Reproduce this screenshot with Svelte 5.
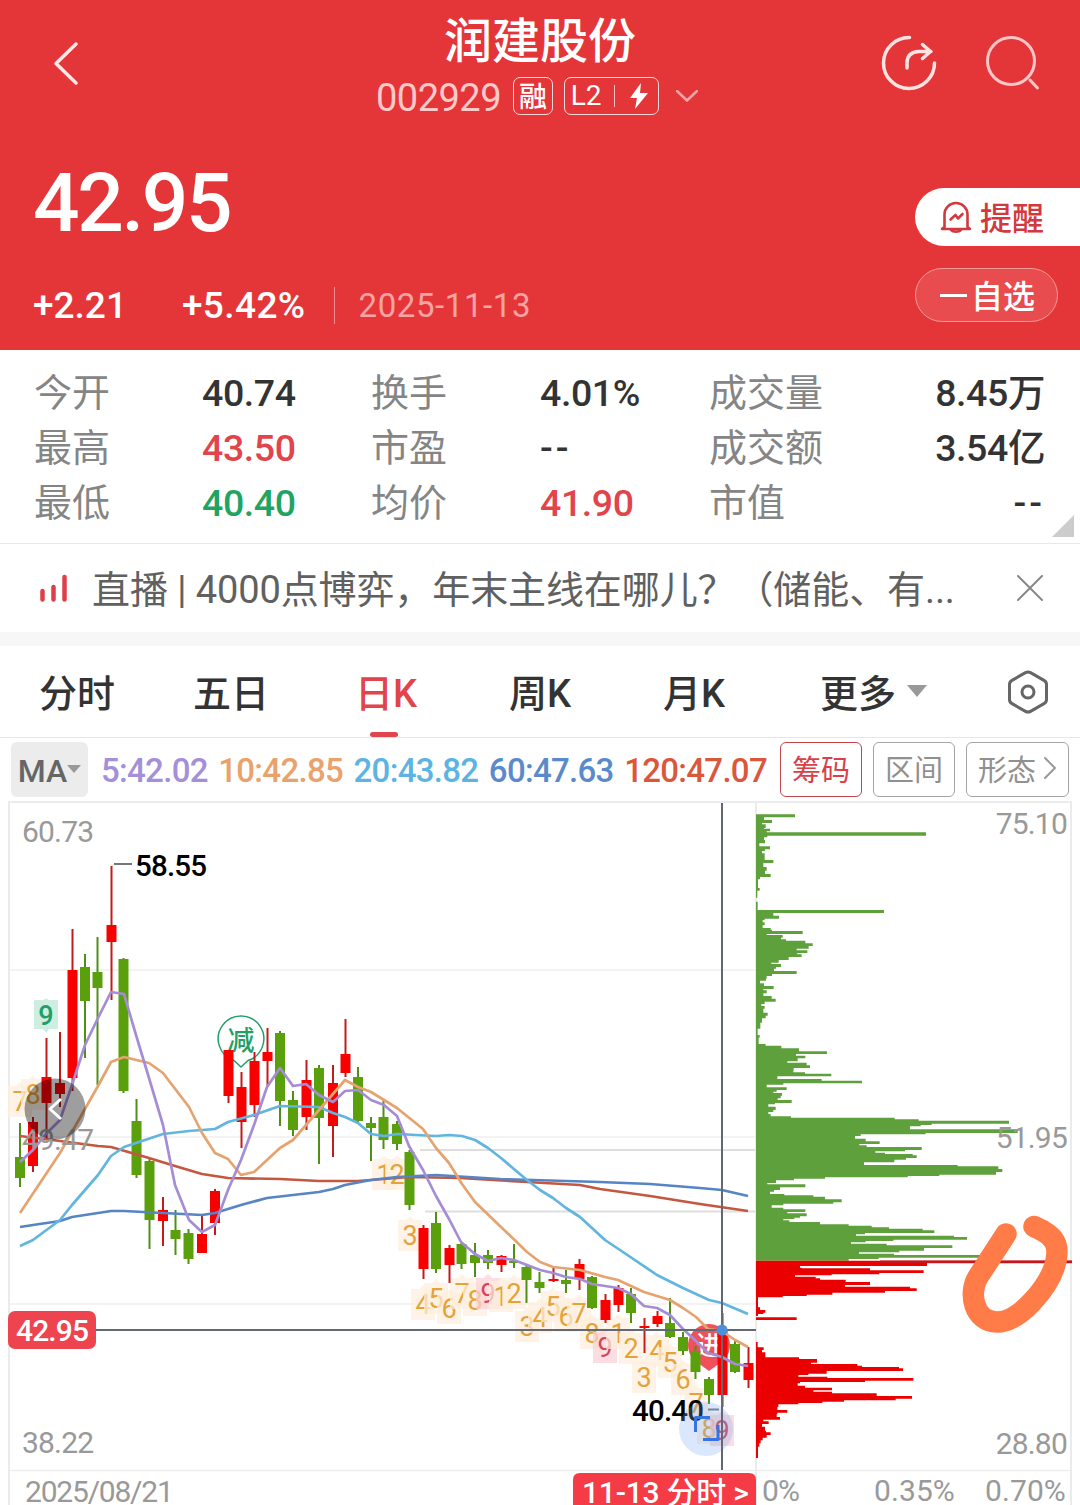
<script lang="ts">
	const stats = [
		['今开', '40.74', '', '换手', '4.01%', '', '成交量', '8.45万'],
		['最高', '43.50', 'up', '市盈', '--', '', '成交额', '3.54亿'],
		['最低', '40.40', 'down', '均价', '41.90', 'up', '市值', '--']
	];

	const averages = [
		{ period: '5', value: '42.02', color: '#a48fd8' },
		{ period: '10', value: '42.85', color: '#e9a26c' },
		{ period: '20', value: '43.82', color: '#5db4e2' },
		{ period: '60', value: '47.63', color: '#5b8acb' },
		{ period: '120', value: '47.07', color: '#d9583b' }
	];

	let tabs = ['分时', '五日', '日K', '周K', '月K'];
	let activeTab = $state('日K');

	// x, high, low, body top, body bottom, rising
	const candles = [
		[20, 1123, 1187, 1157, 1178, 0], [33, 1117, 1172, 1122, 1166, 1],
		[46.5, 1038, 1140, 1077, 1103, 1], [60, 1032, 1107, 1083, 1094, 1],
		[72.5, 929, 1091, 970, 1078, 1], [85, 954, 1058, 967, 1001, 0],
		[97.5, 937, 1085, 972, 988, 0], [111.5, 866, 1000, 925, 942, 1],
		[123.5, 958, 1093, 959, 1091, 0], [136.5, 1099, 1178, 1121, 1175, 0],
		[149.5, 1158, 1249, 1161, 1220, 0], [163, 1197, 1246, 1210, 1221, 1],
		[175.5, 1210, 1255, 1230, 1239, 0], [188.5, 1229, 1264, 1233, 1259, 0],
		[202, 1215, 1253, 1234, 1253, 1], [215, 1189, 1235, 1191, 1223, 1],
		[228.5, 1050, 1103, 1050, 1096, 1], [241.5, 1072, 1148, 1087, 1122, 1],
		[254.5, 1052, 1117, 1061, 1105, 1], [267.5, 1028, 1087, 1052, 1061, 1],
		[280, 1031, 1126, 1033, 1101, 0], [293, 1091, 1136, 1100, 1130, 0],
		[306.5, 1060, 1130, 1080, 1117, 1], [319, 1065, 1164, 1068, 1118, 0],
		[333, 1065, 1157, 1083, 1126, 1], [345.5, 1019, 1077, 1054, 1073, 1],
		[358, 1067, 1123, 1077, 1121, 0], [371, 1117, 1161, 1123, 1128, 0],
		[383.5, 1100, 1149, 1117, 1140, 0], [397, 1121, 1150, 1124, 1144, 0],
		[409.5, 1150, 1210, 1152, 1205, 0], [423.5, 1225, 1279, 1228, 1269, 1],
		[436, 1212, 1273, 1223, 1269, 0], [449.5, 1245, 1283, 1248, 1265, 1],
		[461.5, 1242, 1269, 1244, 1264, 0], [475, 1243, 1277, 1255, 1263, 0],
		[488, 1250, 1269, 1255, 1263, 0], [501.5, 1255, 1272, 1256, 1265, 1],
		[514, 1244, 1268, 1261, 1263, 0], [526.5, 1265, 1303, 1267, 1280, 0],
		[539.5, 1272, 1293, 1282, 1288, 0], [553.5, 1267, 1282, 1279, 1281, 1],
		[566, 1270, 1293, 1280, 1284, 0], [579.5, 1259, 1290, 1264, 1279, 1],
		[592, 1276, 1309, 1277, 1308, 0], [605.5, 1294, 1323, 1300, 1320, 1],
		[618.5, 1285, 1312, 1288, 1305, 1], [631, 1288, 1323, 1294, 1313, 0],
		[644.5, 1318, 1353, 1326, 1328, 1], [657.5, 1311, 1327, 1316, 1324, 1],
		[670, 1298, 1338, 1323, 1337, 0], [683, 1332, 1355, 1337, 1351, 0],
		[695.5, 1346, 1379, 1351, 1372, 0], [709, 1377, 1404, 1379, 1395, 0],
		[722.5, 1313, 1407, 1329, 1395, 1], [735, 1341, 1373, 1344, 1372, 0],
		[748.5, 1347, 1388, 1363, 1380, 1]
	];

	const lines = [
		{ color: '#c4573f', points: '20,1136 60,1141 98,1146 111,1147 149,1158 175,1166 202,1174 228,1178 280,1179 319,1181 358,1181 409,1177 460,1178 527,1182 580,1185 600,1189 650,1196 700,1204 748,1211' },
		{ color: '#5585c5', points: '20,1227 33,1225 60,1221 72,1217 111,1211 124,1211 163,1213 202,1215 215,1213 241,1205 267,1198 293,1195 319,1192 333,1189 345,1185 371,1180 397,1177 436,1175 500,1179 600,1182 650,1184 700,1188 722,1190 748,1196' },
		{ color: '#62b5de', points: '20,1246 33,1240 60,1220 72,1205 98,1175 111,1156 124,1147 163,1134 189,1131 215,1129 228,1122 254,1115 280,1106 319,1107 333,1113 345,1117 358,1123 371,1134 384,1136 397,1134 436,1136 449,1135 462,1136 475,1140 488,1148 501,1158 527,1180 540,1190 553,1198 566,1208 580,1217 605,1240 620,1250 657,1275 683,1288 709,1300 722,1303 748,1314' },
		{ color: '#e5a370', points: '20,1213 60,1153 98,1086 111,1062 124,1057 149,1063 163,1073 189,1107 202,1133 215,1153 228,1159 241,1175 254,1172 267,1160 280,1148 293,1140 319,1110 345,1080 358,1087 371,1092 384,1100 397,1108 423,1129 436,1148 449,1163 462,1184 475,1202 501,1227 527,1252 540,1262 553,1267 580,1270 605,1277 618,1280 644,1292 670,1300 683,1308 696,1317 708,1329 722,1331 735,1340 748,1347' },
		{ color: '#a58dd6', points: '20,1162 33,1150 46,1134 60,1120 72,1085 85,1045 98,1018 111,992 124,994 136,1035 149,1078 163,1125 175,1185 189,1220 202,1232 215,1225 228,1190 241,1160 254,1125 267,1087 280,1068 293,1086 306,1084 319,1095 333,1102 345,1091 358,1090 371,1100 384,1105 397,1116 409,1146 423,1170 436,1196 449,1219 461,1242 475,1254 488,1261 501,1258 514,1260 540,1270 553,1273 566,1277 580,1279 592,1284 618,1288 631,1294 644,1306 657,1308 670,1315 683,1329 696,1341 708,1353 722,1357 735,1364 748,1366' }
	];

	// nine-turn counts: x, y, digit
	const counts = [
		[20, 1101, 7], [33, 1094, 8], [384, 1174, 1], [397, 1174, 2], [410, 1235, 3],
		[423, 1304, 4], [436, 1298, 5], [449, 1308, 6], [462, 1293, 7], [475, 1300, 8],
		[488, 1293, 9], [501, 1296, 1], [514, 1293, 2], [527, 1326, 3], [540, 1317, 4],
		[553, 1306, 5], [566, 1316, 6], [579, 1313, 7], [592, 1333, 8], [605, 1347, 9],
		[618, 1333, 1], [631, 1348, 2], [644, 1377, 3], [657, 1350, 4], [670, 1362, 5],
		[683, 1379, 6], [696, 1403, 7], [709, 1428, 8], [722, 1430, 9]
	];

	// chip profile steps "y:x", three units to a pixel; each step runs to the next one
	const lossChips =
		'43:135 52:42 60:66 69:36 73:47 84:42 86:60 94:50 97:528 107:52 112:42 120:45 130:28 139:60 148:45 153:36 160:44 180:70 189:40 201:50 212:45 222:62 231:30 238:24 264:29 272:22 293:18 305:23 330:402 339:70 347:87 356:44 360:38 367:44 376:38 384:62 389:66 393:158 402:50 405:98 413:93 418:108 422:166 430:188 438:176 446:140 451:172 459:142 463:155 471:116 480:86 488:64 492:93 501:78 506:72 513:140 522:66 528:50 536:48 542:30 550:42 558:71 567:40 571:50 580:40 588:65 596:77 605:44 612:34 618:44 626:40 638:53 647:47 655:36 668:31 686:23 705:29 713:26 732:47 737:94 745:147 754:231 762:138 767:166 775:143 784:112 788:170 796:180 804:131 812:130 817:165 821:244 829:82 837:215 842:336 850:100 854:50 862:110 870:80 875:70 879:96 887:92 895:83 900:125 909:75 913:55 920:77 930:70 936:55 942:62 949:123 953:434 958:506 962:777 971:545 975:512 979:480 988:803 999:527 1003:332 1008:315 1016:347 1024:389 1032:328 1036:350 1041:515 1050:465 1054:376 1058:405 1062:488 1066:500 1074:468 1079:433 1087:342 1095:623 1099:745 1107:757 1116:738 1124:568 1128:473 1132:225 1136:132 1141:78 1149:52 1153:166 1162:90 1170:72 1175:60 1182:103 1186:190 1190:225 1198:275 1207:250 1211:100 1216:65 1223:100 1228:166 1236:112 1240:170 1249:150 1253:133 1257:100 1261:118 1266:210 1273:296 1277:365 1282:417 1286:518 1291:553 1299:345 1303:318 1307:612 1311:651 1319:430 1323:347 1327:303 1331:410 1336:607 1344:522 1352:448 1357:327 1361:432 1365:690 1373:386 1377:296 1382:18';
	const gainChips =
		'1382:966 1390:531 1398:150 1403:155 1405:360 1411:521 1419:388 1423:245 1426:135 1430:197 1435:210 1439:287 1446:360 1455:285 1460:480 1465:500 1473:405 1478:247 1484:170 1488:98 1492:24 1522:30 1530:46 1538:40 1542:24 1548:18 1552:140 1560:18 1626:23 1642:41 1650:36 1657:46 1672:147 1677:201 1688:183 1692:322 1697:336 1701:447 1705:459 1713:230 1721:175 1725:145 1730:232 1734:490 1742:345 1746:150 1750:143 1757:165 1763:246 1771:190 1775:246 1780:380 1788:486 1796:437 1801:282 1805:217 1809:145 1813:85 1821:82 1830:112 1838:82 1843:80 1851:90 1859:40 1864:56 1872:36 1880:45 1892:48 1897:62 1905:50 1913:38 1921:32 1930:28 1940:24 1974:18';

	function profile(steps: string) {
		const rows = steps.split(' ').map((s) => s.split(':').map(Number));
		return `M18 ${rows[0][0]}` + rows.map(([y, x]) => `V${y}H${x}`).join('') + 'Z';
	}
</script>

<div class="page">
	<header>
		<div class="nav">
			<svg class="back" width="30" height="48" viewBox="0 0 30 48">
				<path d="M24 5 4 24.500 24 44" />
			</svg>
			<div class="title">
				<h1>润建股份</h1>
				<div class="code">
					<span class="num">002929</span>
					<span class="tag"><em>融</em></span>
					<span class="tag level">
						L2<i></i>
						<svg width="20" height="28" viewBox="0 0 20 28">
							<path d="M12 1 1 16h7L6 27 19 11h-8z" />
						</svg>
					</span>
					<svg class="more" width="22" height="12" viewBox="0 0 22 12"><path d="m1 1 10 9.500L21 1" /></svg>
				</div>
			</div>
			<div class="actions">
				<svg width="56" height="56" viewBox="0 0 56 56">
					<path d="M28.500 2.500A25.500 25.500 0 1 0 53.500 28" />
					<path d="M26 33v-5q0-11 12-11.500h12M41.500 9.500l8 7-8 7" />
				</svg>
				<svg class="thin" width="56" height="56" viewBox="0 0 56 56">
					<circle cx="26" cy="26" r="23.500" />
					<path d="m45 45 7.500 8" />
				</svg>
			</div>
		</div>
		<div class="quote">
			<div>
				<div class="price">42.95</div>
				<div class="change">
					<span>+2.21</span>
					<span>+5.42%</span>
					<span class="date">2025-11-13</span>
				</div>
			</div>
			<div class="pills">
				<button class="pill alert">
					<svg width="32" height="34" viewBox="0 0 32 34">
						<path d="M4.500 27V14.500a11.500 11.500 0 0 1 23 0V27l2.500 2H2zM11 30a5.500 3 0 0 0 10 0M10.500 19.500l5-4.500 2.500 3.500 4.500-4.500" />
					</svg>
					<em>提醒</em>
				</button>
				<button class="pill watch"><i></i><em>自选</em></button>
			</div>
		</div>
	</header>

	<section class="stats">
		{#each stats as [a, av, ac, b, bv, bc, c, cv]}
			<span>{a}</span><b class={ac}>{av}</b>
			<span>{b}</span><b class={bc} class:dash={bv === '--'}>{bv}</b>
			<span>{c}</span><b class="last" class:dash={cv === '--'}>{cv}</b>
		{/each}
		<i class="corner"></i>
	</section>

	<section class="live">
		<svg width="30" height="30" viewBox="0 0 30 30">
			<path d="M2.500 18v8.500M13.500 14v12.500M24.500 4v22.500" />
		</svg>
		<p>直播 | 4000点博弈，年末主线在哪儿？（储能、有...</p>
		<svg class="close" width="26" height="26" viewBox="0 0 26 26"><path d="m1 1 24 24M25 1 1 25" /></svg>
	</section>

	<nav class="tabs">
		{#each tabs as tab}
			<button class:active={activeTab === tab} onclick={() => (activeTab = tab)}>{tab}</button>
		{/each}
		<button class="drop">更多<i></i></button>
		<svg width="42" height="44" viewBox="0 0 42 44">
			<path d="M18.500 2.600q2.500-1.400 5 0l13.500 7.800q2.500 1.400 2.500 4.100v15q0 2.700-2.500 4.100l-13.500 7.800q-2.500 1.400-5 0L5 33.600q-2.500-1.400-2.500-4.100v-15q0-2.700 2.500-4.100z" />
			<circle cx="21" cy="22" r="6" />
		</svg>
	</nav>

	<div class="ma">
		<button class="picker">MA<i></i></button>
		<div class="values">
			{#each averages as avg}
				<span style="color: {avg.color}">{avg.period}:{avg.value}</span>
			{/each}
		</div>
		<button class="box on">筹码</button>
		<button class="box">区间</button>
		<button class="box wide">形态<svg width="14" height="24" viewBox="0 0 14 24"><path d="m2 2 10 10L2 22" /></svg></button>
	</div>

	<svg class="chart" width="1080" height="705" viewBox="0 800 1080 705">
		<!-- frame and grid -->
		<path class="grid" d="M10 970H755M10 1137H755M10 1304H755M9 1470.500H1071" />
		<path class="gap" d="M420 1150H755M425 1211.500H755" />
		<path class="frame" d="M9 1505V802H1071V1505M756 802V1505" />

		<text class="axis" x="22" y="842">60.73</text>

		<!-- signal bubbles -->
		<path class="reduce" d="M234 1060.500A22.800 22.800 0 1 1 248 1060.500L241 1067z" />
		<text class="reduce-text" x="241" y="1050">减</text>
		<path class="enter" d="M698 1363A21 21 0 1 1 720 1363L709 1371z" />
		<text class="enter-text" x="709" y="1355">进</text>

		<!-- counts -->
		<path class="nine" d="M34 1000h9 q3-3 6 0h9v29h-9l-3 4-3-4h-9z" />
		<text class="nine-text" x="46" y="1025">9</text>
		{#each counts as [x, y, n]}
			<path class="count" class:pink={n === 9} d="M{x - 12} {y - 15}h8l4-4 4 4h8v31h-24z" />
			<text class="digit" class:pink={n === 9} {x} y={y + 10}>{n}</text>
		{/each}

		{#each candles as [x, high, low, top, bottom, rising]}
			<g class={rising ? 'rise' : 'fall'}>
				<path d="M{x} {high}V{low}" />
				<rect x={x - 5} y={top} width="10" height={bottom - top} />
			</g>
		{/each}

		{#each lines as line}
			<polyline points={line.points} stroke={line.color} />
		{/each}

		<text class="axis" x="22" y="1150">49.47</text>
		<text class="axis" x="22" y="1453">38.22</text>
		<text class="axis" x="25" y="1502" textLength="148">2025/08/21</text>

		<!-- scroll handle -->
		<circle cx="55" cy="1109" r="30.500" fill="#000" opacity=".38" />
		<path class="handle" d="m61 1099-11 10 11 10" />

		<path class="tick" d="M114 864H132M708 1409.500H719" />
		<text class="mark" x="135" y="876">58.55</text>
		<text class="mark" x="632" y="1421">40.40</text>

		<!-- chips -->
		<g transform="translate(750 800) scale(.33333)">
			<path d={profile(lossChips)} fill="#5ea03c" />
			<path d={profile(gainChips)} fill="#ea0000" />
		</g>
		<path d="M880 1261.700H1072" stroke="#c4161c" stroke-width="2.500" />
		<text class="axis end" x="1067" y="834">75.10</text>
		<text class="axis end" x="1067" y="1148">51.95</text>
		<text class="axis end" x="1067" y="1454">28.80</text>
		<text class="axis" x="762" y="1501">0%</text>
		<text class="axis" x="874" y="1501" textLength="80">0.35%</text>
		<text class="axis" x="985" y="1501" textLength="80">0.70%</text>

		<!-- crosshair -->
		<circle cx="706" cy="1429" r="27" fill="#7ba9f5" opacity=".28" />
		<path class="scan" d="M695.500 1432V1417.500H710M703 1439.500H718V1425" />
		<path class="cross" d="M10 1330H756M722 803V1470" />
		<circle cx="722" cy="1330" r="5.500" fill="#4b8fdd" />
		<rect x="8" y="1311" width="88" height="38" rx="7" fill="#ee444f" />
		<text class="label" x="16" y="1341">42.95</text>
		<path d="M573 1505V1480q0-7 7-7H749q7 0 7 7V1505z" fill="#f53b45" />
		<text class="label" x="582" y="1503" textLength="166">11-13 分时 &gt;</text>

		<path class="doodle" d="M1006 1234L978 1277C968 1293 974 1322 997 1322C1020 1322 1047 1288 1054 1268C1062 1244 1054 1235 1034 1226.500" />
	</svg>
</div>

<style>
	:global(body) {
		background: #fff;
	}

	.page {
		width: 1080px;
		height: 1505px;
		overflow: hidden;
		font-family: Roboto, 'Noto Sans CJK SC', sans-serif;
		font-weight: 500;
		color: #333;
	}

	svg {
		display: block;
		flex: none;
		fill: none;
		stroke-linecap: round;
		stroke-linejoin: round;
	}

	em {
		padding-top: 4px;
		font-style: normal;
	}

	button {
		display: flex;
		align-items: center;
		padding: 0;
		border: none;
		background: none;
		font: inherit;
		color: inherit;
		white-space: nowrap;
	}

	header {
		height: 350px;
		background: #e43638;
		color: #fff;
	}

	.nav {
		display: grid;
		grid-template-columns: 300px 1fr 300px;
		height: 126px;
	}

	.back {
		margin: 39px 0 0 52px;
		stroke: #ffe9e9;
		stroke-width: 3.5;
	}

	.title {
		display: flex;
		flex-direction: column;
		align-items: center;
	}

	h1 {
		margin: 9px 0 0;
		font-size: 48px;
		font-weight: 500;
		line-height: 66px;
	}

	.code {
		display: flex;
		align-items: center;
		height: 42px;
		margin-right: 6px;
	}

	.num {
		padding-top: 3px;
		font-size: 38px;
		font-weight: 400;
		line-height: 42px;
		letter-spacing: -0.5px;
		color: #ffc9ca;
	}

	.tag {
		box-sizing: border-box;
		display: flex;
		align-items: center;
		justify-content: center;
		width: 40px;
		height: 38px;
		margin-left: 12px;
		border: 1.5px solid #ffd9da;
		border-radius: 7px;
		font-size: 28px;
		line-height: 1;
	}

	.level {
		width: 95px;
		margin-left: 11px;
		padding-right: 3px;
		font-weight: 400;
	}

	.level i {
		width: 1px;
		height: 22px;
		margin: 0 14px 0 13px;
		background: #ffc0c0;
	}

	.level svg {
		fill: #fff;
	}

	.more {
		margin-left: 17px;
		stroke: #f5a5a6;
		stroke-width: 2.5;
	}

	.actions {
		display: flex;
		gap: 48px;
		padding: 35px 0 0 101px;
		stroke: #ffe3e3;
		stroke-width: 3.5;
	}

	.actions .thin {
		stroke: #ffc6c7;
		stroke-width: 3;
	}

	.quote {
		display: flex;
		justify-content: space-between;
	}

	.price {
		margin: 28px 0 0 33px;
		font-size: 82px;
		line-height: 98px;
		letter-spacing: -2.4px;
	}

	.change {
		display: flex;
		align-items: center;
		height: 44px;
		margin: 31px 0 0 33px;
		font-size: 37px;
	}

	.change span {
		margin-right: 55px;
	}

	.change span:nth-child(2) {
		margin-right: 29px;
		letter-spacing: 0.4px;
	}

	.change .date {
		padding-left: 23px;
		border-left: 1px solid #f28d8e;
		font-size: 33px;
		font-weight: 400;
		line-height: 37px;
		letter-spacing: 0.6px;
		color: #f6a3a4;
	}

	.pills {
		width: 165px;
		padding-top: 62px;
	}

	.pill {
		box-sizing: border-box;
		font-size: 32px;
		line-height: 1;
	}

	.alert {
		width: 165px;
		height: 58px;
		gap: 8px;
		padding-left: 25px;
		border-radius: 29px 0 0 29px;
		background: #fff;
		color: #d2393f;
	}

	.alert svg {
		stroke: #d2393f;
		stroke-width: 2.6;
	}

	.watch {
		width: 143px;
		height: 54px;
		margin-top: 22px;
		padding-left: 24px;
		border: 1px solid #f39a9b;
		border-radius: 27px;
		background: #e84c4e;
		gap: 4px;
	}

	.watch i {
		width: 27px;
		height: 3px;
		background: #fff;
	}

	.stats {
		box-sizing: border-box;
		position: relative;
		display: grid;
		grid-template-columns: 168px 169px 169px 169px 169px 1fr;
		grid-auto-rows: 55px;
		height: 194px;
		padding: 16px 35px 0 34px;
		border-bottom: 1px solid #e8e8e8;
		font-size: 38px;
		line-height: 55px;
	}

	.stats span {
		font-weight: 400;
		color: #858585;
	}

	.stats b {
		font-weight: 500;
		font-size: 37.5px;
		letter-spacing: -0.4px;
	}

	.stats .dash {
		letter-spacing: 3px;
	}

	.stats .up {
		color: #e2444c;
	}

	.stats .down {
		color: #1fa463;
	}

	.stats .last {
		text-align: right;
		white-space: nowrap;
	}

	.corner {
		position: absolute;
		right: 6px;
		bottom: 6px;
		border-left: 22px solid transparent;
		border-bottom: 22px solid #ccc;
	}

	.live {
		display: flex;
		align-items: center;
		height: 88px;
		padding: 0 37px 0 40px;
		border-bottom: 14px solid #f7f7f7;
	}

	.live svg {
		stroke: #dd4048;
		stroke-width: 4.5;
	}

	.live p {
		flex: 1;
		margin: 4px 0 0 22px;
		font-size: 38px;
		font-weight: 400;
		line-height: 56px;
		letter-spacing: -0.1px;
		white-space: nowrap;
		color: #606060;
	}

	.live .close {
		stroke: #888;
		stroke-width: 2;
	}

	.tabs {
		box-sizing: border-box;
		display: flex;
		align-items: center;
		height: 92px;
		padding: 0 31px 0 39px;
		border-bottom: 1px solid #e6e6e6;
		font-size: 38px;
	}

	.tabs button {
		position: relative;
		height: 90px;
		margin-right: 78px;
		padding-bottom: 2px;
	}

	.tabs button:nth-child(2) {
		margin-right: 86px;
	}

	.tabs button:nth-child(n + 3) {
		margin-right: 92px;
	}

	.tabs .active {
		color: #e2444c;
	}

	.tabs .active::after {
		content: '';
		position: absolute;
		left: 15px;
		bottom: 0;
		width: 28px;
		height: 5px;
		border-radius: 3px;
		background: #e2444c;
	}

	.tabs button.drop {
		margin: 0 auto 0 3px;
	}

	.drop i {
		margin-left: 11px;
		border: 10px solid transparent;
		border-top: 12px solid #999;
		border-bottom: 0;
	}

	.tabs svg {
		stroke: #666;
		stroke-width: 3;
	}

	.ma {
		display: flex;
		height: 55px;
		padding: 4px 11px 3px;
	}

	.picker {
		width: 77px;
		justify-content: center;
		padding-top: 2px;
		border-radius: 6px;
		background: #ececec;
		font-size: 32px;
		color: #666;
	}

	.picker i {
		margin-bottom: 4px;
		border: 7px solid transparent;
		border-top: 8px solid #999;
		border-bottom: 0;
	}

	.values {
		display: flex;
		align-items: center;
		justify-content: space-between;
		width: 666px;
		margin: 2px 13px 0;
		font-size: 33px;
		letter-spacing: -0.7px;
	}

	.box {
		box-sizing: border-box;
		justify-content: center;
		width: 82px;
		margin-right: 11px;
		padding-bottom: 3px;
		border: 1.5px solid #a5a5a5;
		border-radius: 6px;
		font-size: 29px;
		font-weight: 400;
		color: #909090;
	}

	.box.on {
		border-color: #c4444b;
		color: #d9404a;
	}

	.box.wide {
		width: 103px;
		margin: 0;
		gap: 7px;
	}

	.box svg {
		stroke: #999;
		stroke-width: 2;
	}

	.chart path,
	.chart polyline {
		stroke-linecap: butt;
	}

	.chart polyline {
		stroke-width: 2.7;
	}

	.grid {
		stroke: #efefef;
		stroke-width: 1.5;
	}

	.gap {
		stroke: #dedede;
		stroke-width: 2;
	}

	.frame {
		stroke: #ebebeb;
		stroke-width: 2;
	}

	.axis {
		fill: #999;
		font-size: 30px;
		font-weight: 400;
		letter-spacing: -0.8px;
	}

	.end {
		text-anchor: end;
	}

	.mark {
		fill: #000;
		font-size: 29.5px;
		letter-spacing: -0.8px;
	}

	.label {
		fill: #fff;
		font-size: 30px;
		letter-spacing: -0.9px;
	}

	.rise {
		fill: #f90000;
		stroke: #c51a1a;
	}

	.fall {
		fill: #5aa00d;
		stroke: #4f8f16;
	}

	.rise path,
	.fall path {
		stroke-width: 2;
	}

	.rise rect,
	.fall rect {
		stroke: none;
	}

	.reduce {
		fill: #fff;
		stroke: #20a068;
		stroke-width: 1.5;
	}

	.reduce-text,
	.enter-text,
	.nine-text,
	.digit {
		text-anchor: middle;
		font-size: 27px;
	}

	.reduce-text {
		fill: #20a068;
	}

	.enter {
		fill: #f0505a;
	}

	.enter-text {
		fill: #fff;
		font-size: 26px;
	}

	.nine {
		fill: #cdeee0;
	}

	.nine-text {
		fill: #20a068;
	}

	.count {
		fill: #fdeedd;
		opacity: 0.72;
	}

	.count.pink {
		fill: #fbd0d6;
	}

	.digit {
		fill: #e3a23a;
		font-weight: 400;
	}

	.digit.pink {
		fill: #d0455c;
	}

	.handle {
		stroke: #fff;
		stroke-width: 3;
	}

	.tick {
		stroke: #777;
		stroke-width: 2;
	}

	.scan {
		stroke: #3475e0;
		stroke-width: 3;
	}

	.cross {
		stroke: #646872;
		stroke-width: 2;
	}

	.chart .doodle {
		stroke: #ff7b47;
		stroke-width: 21.5;
		stroke-linecap: round;
	}
</style>
